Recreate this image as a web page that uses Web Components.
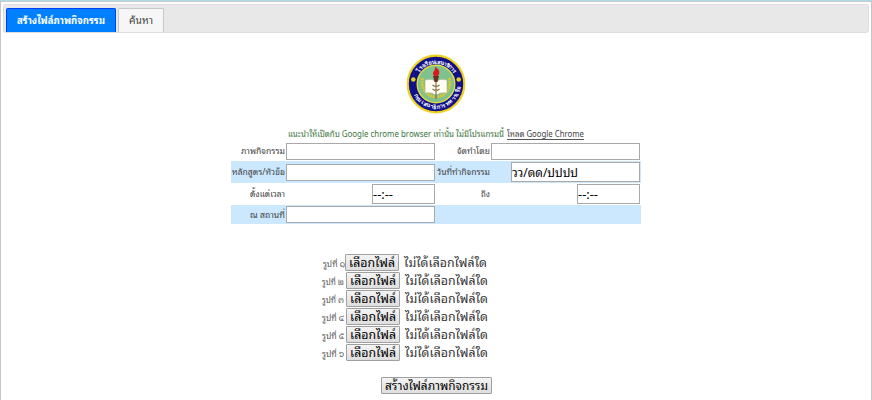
<!DOCTYPE html>
<html lang="th">
<head>
<meta charset="utf-8">
<title>สร้างไฟล์ภาพกิจกรรม</title>
<style>
body{margin:0;background:#fff;font-family:"Noto Sans","Noto Sans Thai Looped",Loma,Tahoma,"Noto Sans Thai","Liberation Sans",sans-serif;color:#444}
</style>
</head>
<body>
<activity-page></activity-page>
<script>
// Single-line text set to a fixed measure
class FitText extends HTMLElement {
  connectedCallback() {
    const w = +this.getAttribute('w');
    this.attachShadow({mode: 'open'}).innerHTML = `<style>
      :host{display:inline-block;flex:none;width:${w}px;white-space:nowrap;text-align:left}
      span{display:inline-block;transform-origin:0 50%}
      </style><span><slot></slot></span>`;
    const s = this.shadowRoot.querySelector('span');
    const n = s.getBoundingClientRect().width;
    if (n) s.style.transform = `scaleX(${w / n})`;
  }
}
class TabItem extends HTMLElement {
  connectedCallback() {
    this.attachShadow({mode: 'open'}).innerHTML = `<style>
      :host{box-sizing:border-box;display:flex;align-items:center;height:24px;padding:0 10px;border:1px solid #c8c8c8;border-bottom:0;border-radius:2px 2px 0 0;background:#f6f6f6;color:#454545;font-size:9.5px;line-height:14px}
      :host([active]){background:#007fff;border-color:#003eff;color:#fff;font-weight:bold}
      </style><slot></slot>`;
  }
}
class SchoolCrest extends HTMLElement {
  connectedCallback() {
    this.attachShadow({mode: 'open'}).innerHTML = `<style>:host{display:block;width:60px;height:60px}svg{display:block}</style>
    <svg width="60" height="60" viewBox="0 0 60 60">
      <defs><path id="up" d="M9.6 30a20.4 20.4 0 0 1 40.8 0"/><path id="dn" d="M5.4 33a24.8 24.8 0 0 0 49.2 0"/></defs>
      <circle cx="30" cy="30" r="28.3" fill="#10108a" stroke="#eed21c" stroke-width="2.2"/>
      <circle cx="30" cy="30" r="18.8" fill="#7fc28e" stroke="#e4dc3c" stroke-width="1.4"/>
      <g fill="#fff" font-family="Noto Sans,sans-serif" font-size="5.6" font-weight="bold">
        <text><textPath href="#up" startOffset="12" textLength="41">โรงเรียนเสนาธิการ</textPath></text>
        <text><textPath href="#dn" startOffset="8" textLength="63">กรมเสนาธิการทหารเรือ</textPath></text>
      </g>
      <g fill="#e6ce25"><circle cx="7.3" cy="25.5" r="2.3"/><circle cx="52.7" cy="25.5" r="2.3"/></g>
      <g fill="none" stroke="#d4c53b" stroke-width="3.2" stroke-dasharray="2.2 .7"><path d="M16.5 24c-2 10 3 17 12 19"/><path d="M43.5 24c2 10-3 17-12 19"/></g>
      <path d="M19 26q6-2 11 1q5-3 11-1v13q-6-1-11 2q-5-3-11-2z" fill="#fffef1" stroke="#a9ad8c" stroke-width=".6"/>
      <path d="M30 27v18M26.5 31q3.5 3 7 0M26.5 35q3.5 3 7 0" fill="none" stroke="#8b744e" stroke-width="1.2"/>
      <path d="M27 22h6l-1.5 6h-3z" fill="#6b3025"/>
      <path d="M28 22c-3-4 2-5 1-9c4 2 6 5 3 9z" fill="#d71920"/>
    </svg>`;
  }
}
class FormField extends HTMLElement {
  connectedCallback() {
    this.attachShadow({mode: 'open'}).innerHTML = `<style>
      :host{display:flex;align-items:center;justify-content:flex-end;gap:1px;font-size:9px;line-height:14px;color:#444}
      .box{box-sizing:border-box;border:1px solid #a9a9a9;background:#fff;width:149px;height:17px;margin-right:1px;display:flex;align-items:center;color:#000;font-size:13px;line-height:17px}
      .label{flex:1;display:flex;justify-content:flex-end}
      :host([kind=date]) .box{width:129px;height:20px}
      :host([kind=date]) .label{padding-right:20px}
      :host([kind=time]) .box{width:63px;height:20px}
      :host([kind=time]) .label{padding-right:86px}
      </style><div class="label"><slot></slot></div><div class="box"><slot name="value"></slot></div>`;
  }
}
class FormRow extends HTMLElement {
  connectedCallback() {
    this.attachShadow({mode: 'open'}).innerHTML = `<style>
      :host{box-sizing:border-box;display:grid;grid-template-columns:205px 204px;gap:1px;align-items:center;width:410px}
      :host([band]){background:#cce8ff}
      </style><slot></slot>`;
  }
}
class PushButton extends HTMLElement {
  connectedCallback() {
    this.attachShadow({mode: 'open'}).innerHTML = `<style>
      :host{box-sizing:border-box;display:inline-flex;align-items:center;justify-content:center;height:17px;padding:0 3px;border:1px solid #a0a0a0;border-radius:1px;background:linear-gradient(#f4f4f4,#dedede);color:#000;font-size:12px;line-height:15px}
      </style><slot></slot>`;
  }
}
class FilePicker extends HTMLElement {
  connectedCallback() {
    this.attachShadow({mode: 'open'}).innerHTML = `<style>
      :host{display:flex;align-items:center;height:17px;margin-bottom:1px;padding-left:322px;color:#333;font-size:12px;line-height:16px}
      :host([first]){padding-left:323px}
      .n{font-size:8px;color:#555;width:24px;padding-top:3px;box-sizing:border-box;display:flex}
      :host([first]) .n{width:22px}
      .s{margin-left:5px;display:flex}
      </style><div class="n"><fit-text w="22">รูปที่ <slot></slot></fit-text></div>
      <push-button><fit-text w="46">เลือกไฟล์</fit-text></push-button>
      <div class="s"><fit-text w="83">ไม่ได้เลือกไฟล์ใด</fit-text></div>`;
  }
}
class ActivityPage extends HTMLElement {
  connectedCallback() {
    this.attachShadow({mode: 'open'}).innerHTML = `<style>
      :host{display:block;box-sizing:border-box;height:400px;overflow:hidden;border-top:1px solid #add8e6;background:#fff}
      .frame{box-sizing:border-box;height:399px;border:1px solid #c5c5c5;border-top:0;border-bottom:0;box-shadow:inset 0 1px #ccc;padding:3px 2px 0}
      nav{box-sizing:border-box;height:29px;display:flex;gap:2px;align-items:flex-end;padding:0 2px;border:1px solid #ddd;border-radius:3px;background:#e8e8e8}
      main{margin:0 -3px;display:flex;flex-direction:column}
      school-crest{margin:21px 0 0 406px}
      .hint{display:flex;gap:3px;margin:13px 0 0 288px;height:14px;font-size:9px;line-height:14px;color:#3c763d}
      a{color:#444;height:12px;border-bottom:1px solid #555;display:flex;line-height:14px}
      .form{margin:0 0 0 231px;display:grid;grid-template-rows:20px 22px 22px 19px}
      .files{margin-top:30px}
      .submit{margin:15px 0 0 381px;display:flex}
      </style>
      <div class="frame"><nav>
        <tab-item active><fit-text w="88">สร้างไฟล์ภาพกิจกรรม</fit-text></tab-item>
        <tab-item><fit-text w="24">ค้นหา</fit-text></tab-item></nav>
      <main><school-crest></school-crest>
      <div class="hint"><fit-text w="216">แนะนำให้เปิดกับ Google chrome browser เท่านั้น ไม่มีโปรแกรมนี้</fit-text><a><fit-text w="77">โหลด Google Chrome</fit-text></a></div>
      <div class="form">
        <form-row><form-field><fit-text w="44">ภาพกิจกรรม</fit-text></form-field><form-field><fit-text w="33">จัดทำโดย</fit-text></form-field></form-row>
        <form-row band><form-field><fit-text w="53">หลักสูตร/หัวข้อ</fit-text></form-field><form-field kind="date"><fit-text w="53">วันที่ทำกิจกรรม</fit-text><fit-text slot="value" w="66">วว/ดด/ปปปป</fit-text></form-field></form-row>
        <form-row><form-field kind="time"><fit-text w="35">ตั้งแต่เวลา</fit-text><fit-text slot="value" w="20">--:--</fit-text></form-field><form-field kind="time"><fit-text w="9">ถึง</fit-text><fit-text slot="value" w="20">--:--</fit-text></form-field></form-row>
        <form-row band><form-field><fit-text w="35">ณ สถานที่</fit-text></form-field></form-row>
      </div>
      <div class="files">${[...'๑๒๓๔๕๖'].map((d, i) => `<file-picker ${i ? '' : 'first'}>${d}</file-picker>`).join('')}</div>
      <div class="submit"><push-button><fit-text w="103">สร้างไฟล์ภาพกิจกรรม</fit-text></push-button></div>
      </main></div>`;
  }
}
customElements.define('push-button', PushButton);
customElements.define('tab-item', TabItem);
customElements.define('school-crest', SchoolCrest);
customElements.define('form-field', FormField);
customElements.define('form-row', FormRow);
customElements.define('file-picker', FilePicker);
customElements.define('activity-page', ActivityPage);
customElements.define('fit-text', FitText);
</script>
</body>
</html>
